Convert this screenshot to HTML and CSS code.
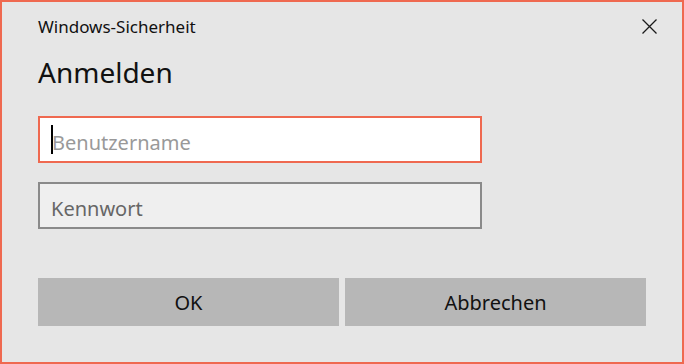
FILE: index.html
```html
<!DOCTYPE html>
<html lang="de">
  <head>
    <meta charset="UTF-8" />
    <title>Windows-Sicherheit</title>
    <link rel="stylesheet" href="styles.css">
  </head>
  <body>
    <div class="dialog">
      <div class="titlebar">
        <span class="title">Windows-Sicherheit</span>
        <button class="close" aria-label="Schließen">
          <svg width="15" height="15" viewBox="0 0 15 15">
            <path d="M0.5 0.5 L14.5 14.5 M14.5 0.5 L0.5 14.5" stroke="#1a1a1a" stroke-width="1.3" fill="none" />
          </svg>
        </button>
      </div>

      <h2>Anmelden</h2>

      <div class="field active">
        <span class="caret"></span>
        <span class="placeholder">Benutzername</span>
      </div>
      <div class="field">
        <span class="placeholder dark">Kennwort</span>
      </div>

      <div class="buttons">
        <button class="btn">OK</button>
        <button class="btn">Abbrechen</button>
      </div>
    </div>
  </body>
</html>
```

FILE: styles.css
```css
* {
  box-sizing: border-box;
}
body {
  margin: 0;
  font-family: "Segoe UI", "Noto Sans", sans-serif;
  color: #111;
}
.dialog {
  width: 684px;
  height: 364px;
  border: 2px solid #ef6950;
  background: #e6e6e6;
  padding: 0 36px;
  display: flex;
  flex-direction: column;
}
.titlebar {
  height: 48px;
  display: flex;
  align-items: center;
  justify-content: space-between;
}
.title {
  font-size: 17px;
}
.close {
  margin-right: -11px;
  padding: 0;
  border: none;
  background: none;
  width: 15px;
  height: 15px;
  display: flex;
}
h2 {
  margin: 4px 0 0;
  font-size: 28px;
  font-weight: normal;
  line-height: 36px;
}
.field {
  width: 444px;
  height: 47px;
  margin-top: 26px;
  border: 2px solid #8a8a8a;
  background: #efefef;
  display: flex;
  align-items: center;
  padding-left: 11px;
}
.field.active {
  border-color: #ef6950;
  background: #fff;
}
.field + .field {
  margin-top: 19px;
}
.caret {
  width: 2px;
  height: 29px;
  margin-right: -1px;
  background: #000;
}
.placeholder {
  margin-top: 5px;
  font-size: 20px;
  color: #999;
}
.placeholder.dark {
  color: #666;
}
.buttons {
  margin-top: 49px;
  width: 608px;
  display: grid;
  grid-template-columns: 1fr 1fr;
  gap: 6px;
}
.btn {
  height: 48px;
  border: none;
  background: #b7b7b7;
  font-family: inherit;
  font-size: 20px;
  color: #111;
}
```
